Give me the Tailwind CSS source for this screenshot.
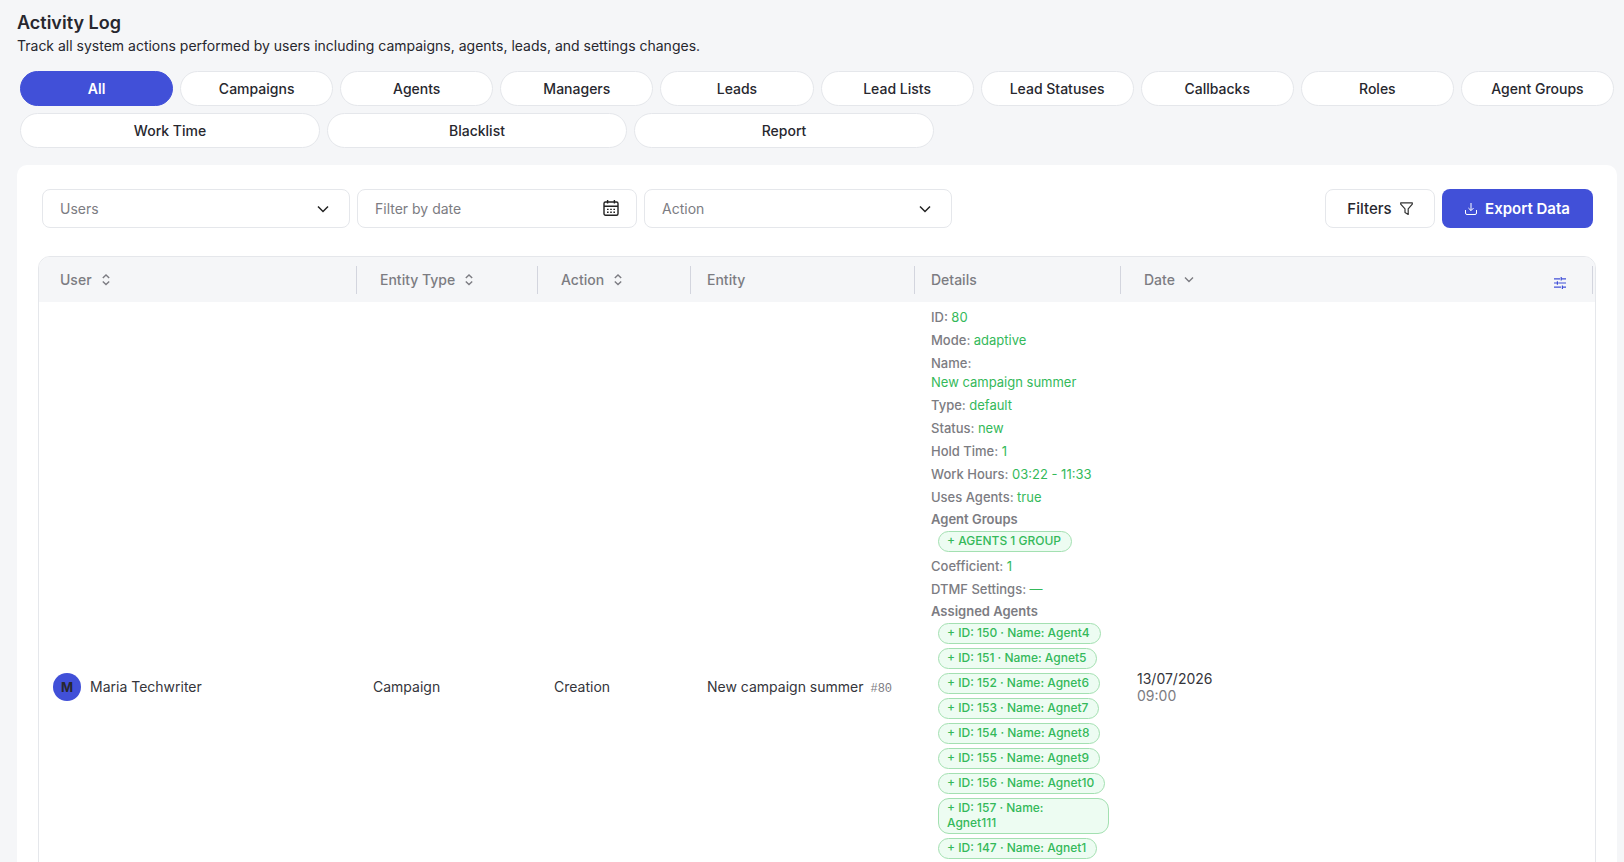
<!DOCTYPE html>
<html lang="en">
<head>
    <meta charset="UTF-8">
    <meta name="viewport" content="width=device-width, initial-scale=1.0">
    <title>Activity Log</title>
    <script src="https://cdn.jsdelivr.net/npm/@tailwindcss/browser@4"></script>
</head>
<body class="h-screen overflow-hidden bg-[#f5f6f8] font-['Inter',sans-serif] text-[#27272e]">
    <main class="pt-3 pr-[7px] pl-[17px]">
        <header>
            <h1 class="text-lg leading-[22px] font-semibold">Activity Log</h1>
            <p class="mt-[2px] text-sm leading-5">Track all system actions performed by users including campaigns, agents, leads, and settings changes.</p>
        </header>

        <!-- entity tabs -->
        <nav class="mt-[15px] mr-[3px] ml-[3px] text-sm font-medium">
            <div id="tabsTop" class="grid grid-cols-10 gap-[7px]"></div>
            <div id="tabsBottom" class="mt-[7px] flex gap-[7px]"></div>
        </nav>

        <section class="mt-[17px] rounded-t-[10px] bg-white px-[21px] pt-6 pb-6">
            <div class="flex gap-[7px] pr-[3px] pl-1 text-sm">
                <div class="relative w-[308px]">
                    <select aria-label="Users" class="h-[39px] w-full appearance-none rounded-lg border border-[#e5e7eb] bg-white px-[17px] text-[#7c7c82]">
                        <option>Users</option>
                    </select>
                    <svg class="pointer-events-none absolute top-[14px] right-[21px] h-3 w-3" viewBox="0 0 12 12" fill="none" stroke="#222" stroke-width="1.5"><path d="M1 3.5l5 5 5-5"/></svg>
                </div>
                <div class="relative w-[280px]">
                    <input type="text" aria-label="Filter by date" placeholder="Filter by date" class="h-[39px] w-full rounded-lg border border-[#e5e7eb] bg-white px-[17px] placeholder:text-[#7c7c82]">
                    <svg class="pointer-events-none absolute top-[11px] right-[18px] h-4 w-4" viewBox="0 0 16 16" fill="none" stroke="#222" stroke-width="1.4">
                        <rect x="1" y="2" width="14" height="13.2" rx="1.5"/>
                        <path d="M1 6.3h14M4.6 0v3.6M11.4 0v3.6"/>
                        <path d="M4 9.4h8.4M4 12.2h8.4" stroke-dasharray="1.6 1.6"/>
                    </svg>
                </div>
                <div class="relative w-[308px]">
                    <select aria-label="Action" class="h-[39px] w-full appearance-none rounded-lg border border-[#e5e7eb] bg-white px-[17px] text-[#7c7c82]">
                        <option>Action</option>
                    </select>
                    <svg class="pointer-events-none absolute top-[14px] right-[21px] h-3 w-3" viewBox="0 0 12 12" fill="none" stroke="#222" stroke-width="1.5"><path d="M1 3.5l5 5 5-5"/></svg>
                </div>
                <button class="ml-auto flex h-[39px] w-[110px] items-center justify-center gap-2 rounded-lg border border-[#e5e7eb] bg-white text-[15px] font-medium">
                    Filters
                    <svg class="h-[13px] w-[13px]" viewBox="0 0 13 13" fill="none" stroke="#333" stroke-width="1.2" stroke-linejoin="round"><path d="M.7.8h11.6v1.4L8.2 6.8v5.6L5 10.6V6.8L.7 2.2z"/></svg>
                </button>
                <button class="flex h-[39px] w-[151px] items-center justify-center gap-2 rounded-lg bg-[#4150d8] text-[15px] font-semibold text-white">
                    <svg class="h-3 w-3" viewBox="0 0 12 12" fill="none" stroke="#fff"><path d="M6 0v7.6M3.4 5L6 7.6 8.6 5M.5 7v3q0 1.5 1.5 1.5h8q1.5 0 1.5-1.5V7"/></svg>
                    Export Data
                </button>
            </div>

            <div class="mt-7 overflow-hidden rounded-t-xl border border-[#e5e7eb]">
                <table class="w-full table-fixed text-left text-sm">
                    <colgroup>
                        <col class="w-[318px]">
                        <col class="w-[181px]">
                        <col class="w-[153px]">
                        <col class="w-[224px]">
                        <col class="w-[206px]">
                        <col>
                    </colgroup>
                    <thead class="bg-[#f5f6f8] text-[#7c7c82]">
                        <tr id="headRow" class="h-[45px]"></tr>
                    </thead>
                    <tbody class="text-[#35353b]">
                        <tr class="h-[770px]">
                            <td class="px-[14px]">
                                <div class="flex items-center gap-[9px]">
                                    <span class="flex h-7 w-7 items-center justify-center rounded-full bg-[#4150d8] text-[13px] font-bold text-[#27272e]">M</span>
                                    Maria Techwriter
                                </div>
                            </td>
                            <td class="px-4">Campaign</td>
                            <td class="px-4">Creation</td>
                            <td class="px-4">New campaign summer <span class="ml-[3px] font-['Liberation_Mono',monospace] text-xs text-[#7c7c82]">#80</span></td>
                            <td id="details" class="px-4 pt-[6px] align-top text-[13px] leading-[19px] font-medium text-[#7c7c82]"></td>
                            <td class="px-4 leading-[17px]">13/07/2026<br><span class="text-[#7c7c82]">09:00</span></td>
                        </tr>
                    </tbody>
                </table>
            </div>
        </section>
    </main>

    <script>
        const tabsTop = ['All', 'Campaigns', 'Agents', 'Managers', 'Leads', 'Lead Lists', 'Lead Statuses', 'Callbacks', 'Roles', 'Agent Groups'];
        const tabsBottom = ['Work Time', 'Blacklist', 'Report'];

        const tab = (name, width) => `
            <button class="h-[35px] rounded-full border ${width} ${name === 'All' ? 'border-[#4150d8] bg-[#4150d8] font-semibold text-white' : 'border-[#e5e7eb] bg-white'}">${name}</button>`;

        document.getElementById('tabsTop').innerHTML = tabsTop.map(t => tab(t, 'w-full')).join('');
        document.getElementById('tabsBottom').innerHTML = tabsBottom.map(t => tab(t, 'w-[300px]')).join('');

        // table header
        const sortIcon = '<svg class="h-3 w-2" viewBox="0 0 8 12" fill="none" stroke="#7c7c82" stroke-width="1.4"><path d="M.8 4L4 1l3.2 3M.8 7.5L4 10.5l3.2-3"/></svg>';
        const downIcon = '<svg class="-ml-px h-2 w-[10px]" viewBox="0 0 10 8" fill="none" stroke="#7c7c82" stroke-width="1.4"><path d="M1 1.5l4 4 4-4"/></svg>';
        const settings = `
            <button aria-label="Columns" class="mt-[6px] mr-[26px] ml-auto">
                <svg class="h-3 w-3" viewBox="0 0 12 12" fill="none" stroke="#4150d8" stroke-width="1.2"><path d="M0 1.8h6M7.2 1.8H12M7.2 0v3.6M0 6h3M4.2 6H12M3.4 4.2v3.6M0 10.2h7M8.4 10.2H12M8.4 8.4V12"/></svg>
            </button>`;
        const columns = [
            { name: 'User', icon: sortIcon, pad: 'pl-[21px]' },
            { name: 'Entity Type', icon: sortIcon, pad: 'pl-[23px]' },
            { name: 'Action', icon: sortIcon, pad: 'pl-[23px]' },
            { name: 'Entity', icon: '', pad: 'pl-4' },
            { name: 'Details', icon: '', pad: 'pl-4' },
            { name: 'Date', icon: downIcon, pad: 'pl-[23px]', extra: settings }
        ];
        document.getElementById('headRow').innerHTML = columns.map(c => `
            <th class="p-0 font-medium ${c.extra ? 'pr-[2px]' : ''}">
                <div class="flex h-7 items-center gap-[10px] border-r border-[#d3d5de] ${c.pad}">${c.name} ${c.icon} ${c.extra || ''}</div>
            </th>`).join('');

        // details of the created campaign
        const details = [
            { label: 'ID', value: '80' },
            { label: 'Mode', value: 'adaptive' },
            { label: 'Name', value: 'New campaign summer' },
            { label: 'Type', value: 'default' },
            { label: 'Status', value: 'new' },
            { label: 'Hold Time', value: '1' },
            { label: 'Work Hours', value: '03:22 - 11:33' },
            { label: 'Uses Agents', value: 'true' },
            { label: 'Agent Groups', tags: ['AGENTS 1 GROUP'] },
            { label: 'Coefficient', value: '1' },
            { label: 'DTMF Settings', value: '—' },
            {
                label: 'Assigned Agents',
                tags: [[150, 'Agent4'], [151, 'Agnet5'], [152, 'Agnet6'], [153, 'Agnet7'], [154, 'Agnet8'], [155, 'Agnet9'], [156, 'Agnet10'], [157, 'Agnet111'], [147, 'Agnet1']]
                    .map(a => `ID: ${a[0]} · Name: ${a[1].length > 7 ? '<br>' : ''}${a[1]}`)
            }
        ];
        document.getElementById('details').innerHTML = details.map(d => d.tags ? `
            <div class="-mt-px mb-[5px]">
                <div class="font-semibold">${d.label}</div>
                <div class="-mr-1 mt-[2px] ml-[7px] flex flex-col items-start gap-1">
                    ${d.tags.map(t => `<span class="rounded-[11px] border border-[#a3e0b1] bg-[#edfcf2] pt-[1px] pr-[10px] pb-[3px] pl-2 text-xs leading-[15px] text-[#34b95a] ${t.includes('<br>') ? 'w-full' : ''}">+ ${t}</span>`).join('')}
                </div>
            </div>` : `
            <div class="mb-1">${d.label}: <span class="inline-block font-normal text-[#34b95a]">${d.value}</span></div>`).join('');
    </script>
</body>
</html>
